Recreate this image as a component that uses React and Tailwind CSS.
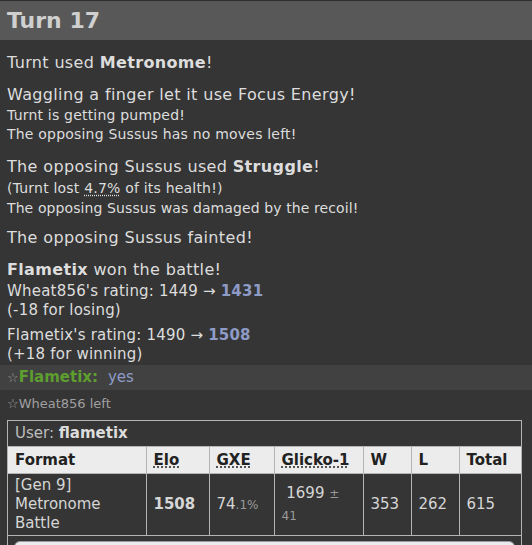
import React from 'react';

const font = { fontFamily: '"DejaVu Sans", Verdana, sans-serif' };

const Dotted = ({ children }) => (
  <span className="underline decoration-dotted underline-offset-2">{children}</span>
);

export default function App() {
  return (
    <div className="w-[532px] h-[545px] overflow-hidden bg-[#353535] text-[#dddddd]" style={font}>
      <div className="h-[40px] border-t border-[#2e2e2e] bg-[#585858] px-[7px] flex items-center">
        <h2 className="text-[22px] font-bold text-[#cfcfcf] leading-none">Turn 17</h2>
      </div>

      <div className="px-[7px] pt-[12px]">
        <div className="text-[16px] leading-[22px] tracking-[0.35px]">
          Turnt used <b>Metronome</b>!
        </div>

        <div className="mt-[10px]">
          <div className="text-[16px] leading-[22px] tracking-[0.35px]">Waggling a finger let it use Focus Energy!</div>
          <div className="text-[14px] leading-[19px] tracking-[0.2px]">Turnt is getting pumped!</div>
          <div className="text-[14px] leading-[19px] tracking-[0.2px]">The opposing Sussus has no moves left!</div>
        </div>

        <div className="mt-[12px]">
          <div className="text-[16px] leading-[22px] tracking-[0.35px]">
            The opposing Sussus used <b>Struggle</b>!
          </div>
          <div className="text-[14px] leading-[20px] tracking-[0.2px]">
            (Turnt lost <Dotted>4.7%</Dotted> of its health!)
          </div>
          <div className="text-[14px] leading-[20px] tracking-[0.1px]">The opposing Sussus was damaged by the recoil!</div>
        </div>

        <div className="mt-[9px] text-[16px] leading-[22px] tracking-[0.35px]">The opposing Sussus fainted!</div>

        <div className="mt-[10px] text-[16px] leading-[22px] tracking-[0.35px]">
          <b>Flametix</b> won the battle!
        </div>
        <div className="mt-[1px] text-[15px] leading-[19px] tracking-[0.2px]">
          Wheat856's rating: 1449 → <b className="text-[#8d9bc6]">1431</b>
          <br />
          (-18 for losing)
        </div>
        <div className="mt-[6px] text-[15px] leading-[19px] tracking-[0.2px]">
          Flametix's rating: 1490 → <b className="text-[#8d9bc6]">1508</b>
          <br />
          (+18 for winning)
        </div>
      </div>

      <div className="mt-[1px] h-[25px] bg-[#414141] px-[7px] flex items-center text-[15px]">
        <span className="text-[13px] text-[#999]">☆</span>
        <b className="text-[#5e9e2f]">Flametix:</b>
        <span className="ml-[10px] text-[#8d9bc6]">yes</span>
      </div>

      <div className="px-[7px] h-[27px] flex items-center text-[13px] text-[#a0a0a0]">
        <span className="text-[13px]">☆</span>Wheat856 left
      </div>

      <div className="mx-[7px] mt-[3px] w-[515px] border border-[#b4b4b4]">
        <div className="h-[25px] px-[7px] flex items-center text-[15px] text-[#bdbdbd]">
          User:&nbsp;<b className="text-[#dddddd]">flametix</b>
        </div>
        <table className="w-full border-collapse text-[15px]">
          <thead>
            <tr className="bg-[#ececec] text-[#222] h-[27px]">
              <th className="w-[138px] border border-[#b4b4b4] border-l-0 px-[7px] text-left font-bold">Format</th>
              <th className="w-[63px] border border-[#b4b4b4] px-[7px] text-left font-bold"><Dotted>Elo</Dotted></th>
              <th className="w-[65px] border border-[#b4b4b4] px-[7px] text-left font-bold"><Dotted>GXE</Dotted></th>
              <th className="w-[89px] border border-[#b4b4b4] px-[7px] text-left font-bold"><Dotted>Glicko-1</Dotted></th>
              <th className="w-[48px] border border-[#b4b4b4] px-[7px] text-left font-bold">W</th>
              <th className="w-[48px] border border-[#b4b4b4] px-[7px] text-left font-bold">L</th>
              <th className="border border-[#b4b4b4] border-r-0 px-[7px] text-left font-bold">Total</th>
            </tr>
          </thead>
          <tbody>
            <tr className="h-[62px] text-[#d6d6d6]">
              <td className="border border-[#b4b4b4] border-l-0 px-[7px] leading-[19px]">
                [Gen 9]<br />Metronome<br />Battle
              </td>
              <td className="border border-[#b4b4b4] px-[7px] font-bold">1508</td>
              <td className="border border-[#b4b4b4] px-[7px]">
                74<span className="text-[12px] text-[#9a9a9a]">.1%</span>
              </td>
              <td className="border border-[#b4b4b4] px-[7px] leading-[21px]">
                &nbsp;1699 <span className="text-[12px] text-[#9a9a9a]">±<br />41</span>
              </td>
              <td className="border border-[#b4b4b4] px-[7px]">353</td>
              <td className="border border-[#b4b4b4] px-[7px]">262</td>
              <td className="border border-[#b4b4b4] border-r-0 px-[7px]">615</td>
            </tr>
            <tr>
              <td colSpan={7} className="px-[6px] pt-[5px]">
                <div className="h-[20px] rounded-t-[6px] bg-[#ebebef] border border-[#999]"></div>
              </td>
            </tr>
          </tbody>
        </table>
      </div>
    </div>
  );
}
